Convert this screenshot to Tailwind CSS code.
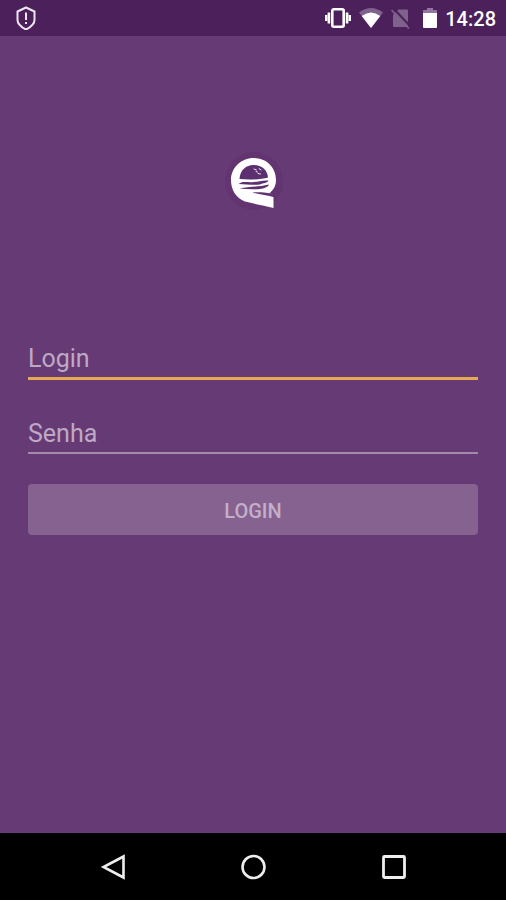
<!DOCTYPE html>
<html lang="pt-BR">
<head>
<meta charset="utf-8">
<meta name="viewport" content="width=device-width, initial-scale=1">
<title>Login</title>
<script src="https://cdn.jsdelivr.net/npm/@tailwindcss/browser@4"></script>
</head>
<body class="flex min-h-screen flex-col bg-[#663a75] font-[Roboto,sans-serif]">
  <header class="flex h-9 items-center justify-between bg-[#4b205b] pr-[10px] pl-[14px] text-white">
    <svg class="h-6 w-6" viewBox="0 0 24 24" fill="none" stroke="#eee6f1" stroke-width="2" stroke-linejoin="round" aria-hidden="true">
      <path d="M12 1.500 L20.500 5.500 V14 C20.500 18.500 16 21.500 12 23.500 C8 21.500 3.500 18.500 3.500 14 V5.500 Z" />
      <path d="M12 6.500 V14 M12 16 V18" />
    </svg>
    <div class="flex items-center gap-2">
      <svg class="h-6 w-7" viewBox="0 0 28 24" aria-hidden="true">
        <rect x="9.300" y="3.300" width="11.400" height="17.400" rx="1.500" fill="none" stroke="#fff" stroke-width="2.600" />
        <path d="M2 9 H4.300 V15 H2 Z M4.600 6.500 H7.200 V17.500 H4.600 Z M25.700 9 H28 V15 H25.700 Z M22.800 6.500 H25.400 V17.500 H22.800 Z" fill="#fff" />
      </svg>
      <svg class="h-6 w-6" viewBox="0 0 24 24" aria-hidden="true">
        <path d="M12 22 L0 6.500 Q12 -2.500 24 6.500 Z" fill="#80608c" />
        <path d="M12 22 L2.700 10 Q12 3 21.300 10 Z" fill="#fff" />
      </svg>
      <svg class="h-6 w-5" viewBox="0 0 20 24" aria-hidden="true">
        <path d="M7.500 3.500 H16 Q17 3.500 17 4.500 V20 Q17 21 16 21 H3 Q2 21 2 20 V9 Z" fill="#80608c" />
        <path d="M2 2 L19.500 20.500" stroke="#4b205b" stroke-width="2" />
        <path d="M0.500 4 L18 22.500" stroke="#80608c" stroke-width="1.800" />
      </svg>
      <svg class="h-6 w-5" viewBox="-3 0 20 24" aria-hidden="true">
        <path d="M1 7 V5 Q1 4 2 4 H5 V2 H11 V4 H14 Q15 4 15 5 V7 Z" fill="#93769e" />
        <path d="M1 7 H15 V21 Q15 22 14 22 H2 Q1 22 1 21 Z" fill="#fff" />
      </svg>
      <time class="-ml-0.5 pt-px text-xl leading-6 font-medium">14:28</time>
    </div>
  </header>

  <main class="flex flex-1 flex-col px-7 pt-[104px]">
    <svg class="h-20 w-20 self-center" viewBox="0 0 80 80" role="img" aria-label="Logo">
      <circle cx="41" cy="41" r="29" fill="#623571" />
      <path d="M60.500 68 L60.500 56 L57 52.500 C61.500 49 63 44.500 63 40 C63 27 53 18 40.700 18 C28 18 18 28 18 40 C18 50 23 58 32 61.500 C41 64 51 65.500 60.500 68 Z" fill="#fff" />
      <path d="M26.500 39 C27 30 33 25 40.500 25 C48.500 25 54.500 30 55 37.500 C48 39.500 36 40 26.500 39 Z" fill="#5c3070" />
      <path d="M25.500 44 C30 41 34 42.500 39 42.300 C44 42 49 40 55.500 40.500 C54.500 43.500 50 42.500 47 44.500 C40 45.500 33 44 25.500 44 Z" fill="#5c3070" />
      <path d="M26.500 48.500 C36 46.500 46 47 56 44.500 C55 47 51 48.500 47 49 C40 49.700 33 49.300 26.500 48.500 Z" fill="#5c3070" />
      <path d="M39.500 52.500 C46 52 54 52.500 62 54 L62 57.500 C54 55 46 54.500 39.500 52.500 Z" fill="#623571" />
      <path d="M41 29 L43.500 30 M46 28.500 L48 30 M45 33.500 L47.500 34 M43 31.500 L44.500 32" stroke="#eee6f1" stroke-width="1" stroke-linecap="round" />
    </svg>

    <form class="mt-[121px] flex flex-col">
      <input type="text" aria-label="Login" placeholder="Login" autocomplete="username" class="h-[39px] w-full border-b-3 border-[#e5a951] bg-transparent pb-0.5 text-[25px] text-white outline-none placeholder:text-[#bea9c5]">
      <input type="password" aria-label="Senha" placeholder="Senha" autocomplete="current-password" class="mt-9 h-[38px] w-full border-b-2 border-[#a18ba9] bg-transparent pb-0.5 text-[25px] text-white outline-none placeholder:text-[#bea9c5]">
      <button type="submit" disabled class="mt-[30px] h-[51px] w-full rounded-sm bg-[#85628f] pt-0.5 text-xl font-medium text-[#c3afc9]">LOGIN</button>
    </form>
  </main>

  <nav class="flex h-[67px] items-center justify-center gap-28 bg-black text-[#eeeeee]" aria-label="Sistema">
    <button type="button" aria-label="Voltar"><svg class="h-7 w-7" viewBox="0 0 28 28" fill="none" stroke="currentColor" stroke-width="2.600"><path d="M24.500 3.500 V24.500 L4.500 14 Z" /></svg></button>
    <button type="button" aria-label="Início"><svg class="h-7 w-7" viewBox="0 0 28 28" fill="none" stroke="currentColor" stroke-width="2.600"><circle cx="14.500" cy="14" r="11" /></svg></button>
    <button type="button" aria-label="Recentes"><svg class="h-7 w-7" viewBox="0 0 28 28" fill="none" stroke="currentColor" stroke-width="2.800"><rect x="4.500" y="3.500" width="21" height="21" rx="1" /></svg></button>
  </nav>
</body>
</html>
